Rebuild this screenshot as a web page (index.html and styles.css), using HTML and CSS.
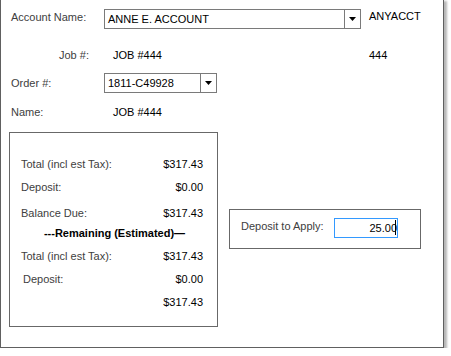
FILE: index.html
```html
<!DOCTYPE html>
<html>
<head>
<meta charset="utf-8">
<link rel="stylesheet" href="styles.css">
</head>
<body>
<div class="window">
  <div class="row row-account">
    <span class="label label-main">Account Name:</span>
    <div class="combo combo-account">
      <span class="combo-text">ANNE E. ACCOUNT</span>
      <span class="combo-btn"><svg class="arrow" width="7" height="4" viewBox="0 0 7 4"><polygon points="0,0 7,0 3.5,4" fill="#000"/></svg></span>
    </div>
    <span class="code code-top">ANYACCT</span>
  </div>

  <div class="row row-text row-job">
    <span class="label label-job">Job #:</span>
    <span class="value value-job">JOB #444</span>
    <span class="code">444</span>
  </div>

  <div class="row row-order">
    <span class="label label-main label-order">Order #:</span>
    <div class="combo combo-order">
      <span class="combo-text">1811-C49928</span>
      <span class="combo-btn"><svg class="arrow" width="7" height="4" viewBox="0 0 7 4"><polygon points="0,0 7,0 3.5,4" fill="#000"/></svg></span>
    </div>
  </div>

  <div class="row row-text row-name">
    <span class="label label-name">Name:</span>
    <span class="value">JOB #444</span>
  </div>

  <div class="lower">
    <div class="summary">
      <div class="sum-row"><span class="label">Total (incl est Tax):</span><span class="value">$317.43</span></div>
      <div class="sum-row"><span class="label">Deposit:</span><span class="value">$0.00</span></div>
      <div class="sum-row sum-balance"><span class="label">Balance Due:</span><span class="value">$317.43</span></div>
      <div class="sum-heading">---Remaining (Estimated)—</div>
      <div class="sum-row"><span class="label">Total (incl est Tax):</span><span class="value">$317.43</span></div>
      <div class="sum-row"><span class="label indent">Deposit:</span><span class="value">$0.00</span></div>
      <div class="sum-row sum-end"><span class="value">$317.43</span></div>
    </div>

    <div class="deposit">
      <span class="label deposit-label">Deposit to Apply:</span>
      <div class="amount">25.00<span class="caret"></span></div>
    </div>
  </div>
</div>
</body>
</html>
```

FILE: styles.css
```css
html, body {
  margin: 0;
  padding: 0;
  background: #ffffff;
}

body {
  font-family: "Liberation Sans", Arial, sans-serif;
  font-size: 11px;
  color: #000;
}

.window {
  box-sizing: border-box;
  width: 444px;
  height: 348px;
  border: 1px solid #606060;
  border-top: none;
  box-shadow: 2px 2px 2px 1px rgba(0, 0, 0, 0.28);
  padding-top: 9px;
  background: #fff;
}

.label {
  color: #404040;
  line-height: 13px;
}

.value {
  color: #000;
  line-height: 13px;
}

.row {
  display: flex;
  align-items: flex-start;
}

.row-account {
  height: 20px;
}

.row-text {
  height: 13px;
  line-height: 13px;
}

.row-job {
  margin-top: 20px;
}

.row-order {
  margin-top: 11px;
  height: 20px;
}

.row-name {
  margin-top: 13px;
}

.label-main {
  box-sizing: border-box;
  width: 103px;
  padding-left: 10px;
  margin-top: 2px;
}

.label-order {
  margin-top: 4px;
}

.label-job {
  box-sizing: border-box;
  width: 112px;
  padding-left: 58px;
}

.label-name {
  box-sizing: border-box;
  width: 112px;
  padding-left: 10px;
}

.value-job {
  width: 256px;
}

.code {
  color: #000;
  line-height: 13px;
}

.code-top {
  margin-left: 8px;
  margin-top: 1px;
}

.combo {
  box-sizing: border-box;
  height: 20px;
  border: 1px solid #7a7a7a;
  display: flex;
  background: #fff;
}

.combo-account {
  width: 257px;
}

.combo-order {
  width: 113px;
}

.combo-text {
  flex: 1;
  padding-left: 3px;
  line-height: 18px;
  color: #000;
}

.combo-btn {
  width: 15px;
  border-left: 1px solid #7a7a7a;
  display: flex;
  align-items: center;
  justify-content: center;
}

.arrow {
  display: block;
}

.lower {
  margin-top: 13px;
  display: flex;
  align-items: flex-start;
}

.summary {
  box-sizing: border-box;
  margin-left: 8px;
  width: 209px;
  height: 195px;
  border: 1px solid #686868;
  padding: 20px 14px 0 11px;
}

.sum-row {
  display: flex;
  justify-content: space-between;
  height: 23px;
  line-height: 23px;
}

.sum-row .label,
.sum-row .value {
  line-height: 23px;
}

.sum-balance {
  margin-top: 3px;
  height: 20px;
}

.sum-end {
  justify-content: flex-end;
}

.indent {
  padding-left: 2px;
}

.sum-heading {
  height: 23px;
  line-height: 23px;
  text-align: center;
  font-weight: bold;
  color: #000;
  padding-left: 5px;
}

.deposit {
  box-sizing: border-box;
  margin-left: 11px;
  margin-top: 77px;
  width: 192px;
  height: 40px;
  border: 1px solid #686868;
  padding: 8px 0 0 11px;
  display: flex;
  align-items: flex-start;
}

.deposit-label {
  width: 93px;
  margin-top: 2px;
}

.amount {
  position: relative;
  box-sizing: border-box;
  width: 64px;
  height: 20px;
  border: 1px solid #3399ff;
  text-align: right;
  padding-right: 0;
  line-height: 18px;
  color: #000;
}

.caret {
  position: absolute;
  right: 1px;
  top: 1px;
  width: 1px;
  height: 15px;
  background: #000;
}
```
